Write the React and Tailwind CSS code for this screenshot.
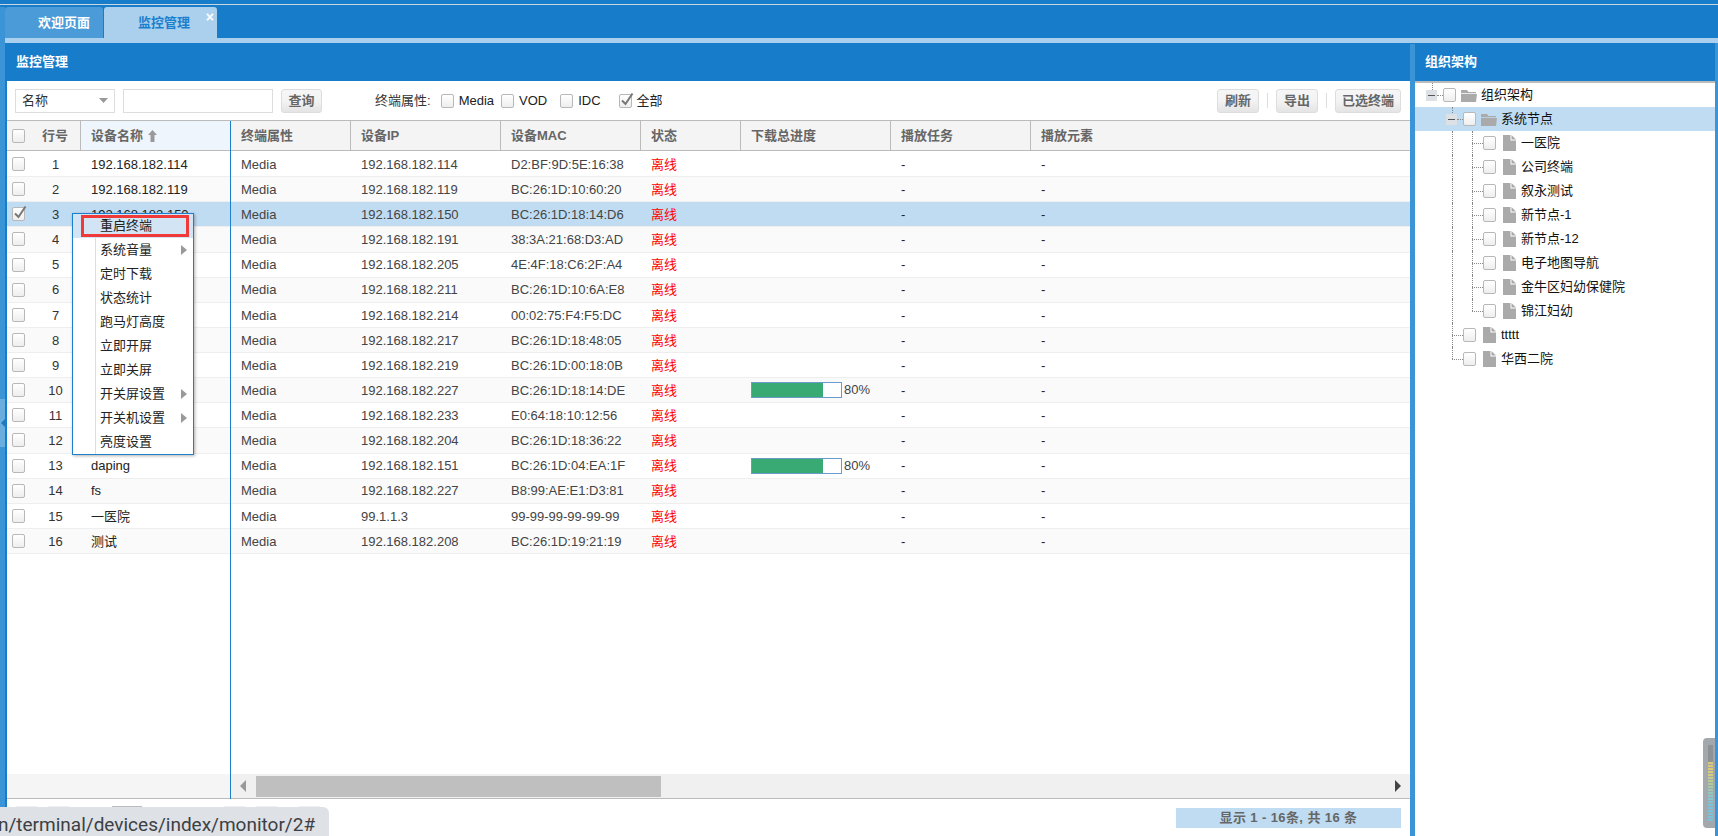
import React from "react";

const rows = [
  ["192.168.182.114", "192.168.182.114", "D2:BF:9D:5E:16:38"],
  ["192.168.182.119", "192.168.182.119", "BC:26:1D:10:60:20"],
  ["192.168.182.150", "192.168.182.150", "BC:26:1D:18:14:D6"],
  ["192.168.182.191", "192.168.182.191", "38:3A:21:68:D3:AD"],
  ["192.168.182.205", "192.168.182.205", "4E:4F:18:C6:2F:A4"],
  ["192.168.182.211", "192.168.182.211", "BC:26:1D:10:6A:E8"],
  ["192.168.182.214", "192.168.182.214", "00:02:75:F4:F5:DC"],
  ["192.168.182.217", "192.168.182.217", "BC:26:1D:18:48:05"],
  ["192.168.182.219", "192.168.182.219", "BC:26:1D:00:18:0B"],
  ["192.168.182.227", "192.168.182.227", "BC:26:1D:18:14:DE", 80],
  ["192.168.182.233", "192.168.182.233", "E0:64:18:10:12:56"],
  ["192.168.182.204", "192.168.182.204", "BC:26:1D:18:36:22"],
  ["daping", "192.168.182.151", "BC:26:1D:04:EA:1F", 80],
  ["fs", "192.168.182.227", "B8:99:AE:E1:D3:81"],
  ["一医院", "99.1.1.3", "99-99-99-99-99-99"],
  ["测试", "192.168.182.208", "BC:26:1D:19:21:19"],
];

const menu = [
  ["重启终端"],
  ["系统音量", true],
  ["定时下载"],
  ["状态统计"],
  ["跑马灯高度"],
  ["立即开屏"],
  ["立即关屏"],
  ["开关屏设置", true],
  ["开关机设置", true],
  ["亮度设置"],
];

function Check({ checked, className = "" }) {
  return (
    <span className={"relative block w-[13px] h-[14px] shrink-0 rounded-[2px] border border-[#b8b8b8] bg-gradient-to-b from-white to-[#eeeeee] " + className}>
      {checked && (
        <svg className="absolute left-0 -top-[3px]" width="14" height="15" viewBox="0 0 14 15">
          <path d="M2 8.5 L5.5 12 L12.5 1.5" fill="none" stroke="#777" strokeWidth="2" />
        </svg>
      )}
    </span>
  );
}

function Btn({ children, className = "" }) {
  return (
    <button className={"h-6 rounded-[3px] border border-[#dddddd] bg-gradient-to-b from-[#f6f6f6] via-[#f3f3f3] to-[#e4e4e4] text-[13px] text-[#666] font-bold " + className}>
      {children}
    </button>
  );
}

function FilterBox({ label, checked, className = "" }) {
  return (
    <span className={"flex items-center gap-[5px] text-[13px] text-[#222] " + className}>
      <Check checked={checked} />
      {label}
    </span>
  );
}

function Th({ w, children, last }) {
  return (
    <div className={"h-full shrink-0 pl-[10px] flex items-center font-bold text-[#666] text-[13px] " + w + (last ? "" : " border-r border-[#bbbbbb]")}>
      {children}
    </div>
  );
}

function rowBg(i) {
  if (i === 2) return "bg-[#bfdcf2]";
  return i % 2 === 0 ? "bg-white" : "bg-[#fafafa]";
}

function Folder() {
  return (
    <svg width="16" height="13" viewBox="0 0 16 13" className="shrink-0">
      <path d="M0 1 H6 L7.5 3 H15 V4.2 H0 Z" fill="#aaa" />
      <path d="M0 5 H16 L15 13 H0 Z" fill="#aaa" />
    </svg>
  );
}

function FileIcon() {
  return (
    <svg width="13" height="16" viewBox="0 0 13 16" className="shrink-0">
      <path d="M0 0 H7.5 V5.5 H13 V16 H0 Z" fill="#aaa" />
      <path d="M8.5 0 L13 4.5 H8.5 Z" fill="#aaa" />
    </svg>
  );
}

function Expander() {
  return (
    <span className="relative w-[11px] h-[11px] shrink-0 bg-[#dde0e4]">
      <span className="absolute left-[2px] top-[5px] w-[7px] h-px bg-[#555]" />
    </span>
  );
}

const dotV = "absolute w-0 border-l border-dotted border-[#888]";
const dotH = "absolute h-0 border-t border-dotted border-[#888]";

function TreeRow({ pl, label, icon, expander, active, v1, v2, h }) {
  return (
    <div className={"relative h-6 flex items-center text-[13px] text-[#111] " + pl + (active ? " bg-[#bfdcf2]" : "")}>
      {v1 === "full" && <span className={dotV + " left-[37px] top-0 h-6"} />}
      {v1 === "half" && <span className={dotV + " left-[37px] top-0 h-3"} />}
      {v2 === "full" && <span className={dotV + " left-[57px] top-0 h-6"} />}
      {v2 === "half" && <span className={dotV + " left-[57px] top-0 h-3"} />}
      {h === 1 && <span className={dotH + " left-[37px] top-3 w-[11px]"} />}
      {h === 2 && <span className={dotH + " left-[57px] top-3 w-[11px]"} />}
      {expander && <Expander />}
      {expander && <span className="w-[6px] shrink-0 border-t border-dotted border-[#888]" />}
      <Check />
      <span className={icon === "folder" ? "ml-[5px] mr-[4px]" : "ml-[7px] mr-[5px]"}>
        {icon === "folder" ? <Folder /> : <FileIcon />}
      </span>
      <span>{label}</span>
    </div>
  );
}

const ticks = ["#d9c878","#dcc870","#dfc972","#d8ca78","#d2cc80","#c8cc88","#bccb90","#aecb98","#a4c9a4","#9cc8b0","#94c8bc","#8cc6c8","#84c5d0","#80c4d8","#7cc2dc","#7cc2dc","#7cc2dc","#7cc2dc","#7cc2dc","#7cc2dc"];

export default function App() {
  return (
    <div className="relative w-[1718px] h-[836px] overflow-hidden bg-[#177cc9] flex flex-col [font-family:'Liberation_Sans','Noto_Sans_CJK_SC',sans-serif] text-[13px]">
      <div className="h-1 shrink-0" />
      <div className="h-px shrink-0 bg-[#c9d6e0]" />
      <div className="flex-1 min-h-0 flex">
        <div className="relative w-[5px] shrink-0 mt-[2px] bg-[#3a94d6]">
          <div className="absolute left-0 top-[392px] w-[5px] h-12 bg-[#6aaee0] flex items-center justify-center">
            <svg width="4" height="8" viewBox="0 0 4 8"><path d="M4 0 V8 L0 4 Z" fill="#1f78be" /></svg>
          </div>
        </div>
        <div className="flex-1 min-w-0 flex flex-col">
          {/* tabs */}
          <div className="h-[33px] shrink-0 flex pt-[2px] gap-px">
            <div className="w-[98px] rounded-t-[3px] bg-[#4a9bd8] text-white font-bold pl-[33px] leading-[32px]">欢迎页面</div>
            <div className="relative w-[113px] rounded-t-[3px] bg-[#aad0ee] text-[#1b7fcd] font-bold pl-[34px] leading-[32px]">
              监控管理
              <span className="absolute right-[3px] top-[3px] text-white text-[14px] leading-[14px]">×</span>
            </div>
          </div>
          <div className="h-[5px] shrink-0 bg-[#aad0ee]" />
          {/* panels */}
          <div className="flex-1 min-h-0 flex">
            {/* main panel */}
            <div className="w-[1405px] shrink-0 flex flex-col">
              <div className="h-[38px] shrink-0 pl-[11px] flex items-center text-white font-bold">监控管理</div>
              <div className="flex-1 min-h-0 ml-[2px] bg-white flex flex-col">
                {/* toolbar */}
                <div className="h-10 shrink-0 border-b border-[#bbbbbb] flex items-center justify-between pr-[9px]">
                  <div className="flex items-center">
                    <div className="ml-2 w-[100px] h-6 border border-[#dddddd] flex items-center justify-between pl-[6px] pr-[6px] text-[#333]">
                      <span>名称</span>
                      <svg width="9" height="5" viewBox="0 0 9 5"><path d="M0 0 H9 L4.5 5 Z" fill="#999" /></svg>
                    </div>
                    <div className="ml-2 w-[150px] h-6 border border-[#dddddd]" />
                    <Btn className="ml-2 w-[41px]">查询</Btn>
                    <span className="ml-[53px] text-[#333]">终端属性:</span>
                    <FilterBox label="Media" className="ml-[10px]" />
                    <FilterBox label="VOD" className="ml-[7px]" />
                    <FilterBox label="IDC" className="ml-[13px]" />
                    <FilterBox label="全部" checked className="ml-[18px]" />
                  </div>
                  <div className="flex items-center">
                    <Btn className="w-[42px]">刷新</Btn>
                    <span className="mx-2 w-px h-[15px] bg-[#dddddd]" />
                    <Btn className="w-[42px]">导出</Btn>
                    <span className="mx-2 w-px h-[15px] bg-[#dddddd]" />
                    <Btn className="w-[66px]">已选终端</Btn>
                  </div>
                </div>
                {/* table */}
                <div className="flex-1 min-h-0 flex">
                  <div className="w-[224px] shrink-0 border-r border-[#1b7fcd] flex flex-col">
                    <div className="h-[30px] shrink-0 flex bg-[#f4f4f4] border-b border-[#bbbbbb]">
                      <div className="w-[33px] shrink-0 flex items-center pl-[5px]"><Check /></div>
                      <div className="w-[41px] shrink-0 border-r border-[#bbbbbb] pr-[10px] flex items-center justify-center font-bold text-[#666]">行号</div>
                      <div className="flex-1 bg-[#eef5fc] pl-[10px] flex items-center gap-[5px] font-bold text-[#666]">
                        设备名称
                        <svg width="9" height="12" viewBox="0 0 9 12"><path d="M4.5 0 L9 5 H6.5 V12 H2.5 V5 H0 Z" fill="#999" /></svg>
                      </div>
                    </div>
                    <div className="flex-1 min-h-0 pt-px">
                      {rows.map((r, i) => (
                        <div key={i} className={"h-[25.13px] border-b border-[#eeeeee] flex items-center " + rowBg(i)}>
                          <div className="w-[33px] shrink-0 pl-[5px]"><Check checked={i === 2} /></div>
                          <div className="w-[41px] shrink-0 pt-px pr-[10px] text-center text-[#333]">{i + 1}</div>
                          <div className="flex-1 pt-px pl-[10px] text-[#222]">{r[0]}</div>
                        </div>
                      ))}
                    </div>
                    <div className="h-[25px] shrink-0 bg-[#f5f5f5] border-b border-[#bbbbbb]" />
                  </div>
                  <div className="flex-1 min-w-0 flex flex-col">
                    <div className="h-[30px] shrink-0 flex bg-[#f4f4f4] border-b border-[#bbbbbb]">
                      <Th w="w-[120px]">终端属性</Th>
                      <Th w="w-[150px]">设备IP</Th>
                      <Th w="w-[140px]">设备MAC</Th>
                      <Th w="w-[100px]">状态</Th>
                      <Th w="w-[150px]">下载总进度</Th>
                      <Th w="w-[140px]">播放任务</Th>
                      <Th w="w-[140px]" last>播放元素</Th>
                    </div>
                    <div className="flex-1 min-h-0 pt-px">
                      {rows.map((r, i) => (
                        <div key={i} className={"h-[25.13px] border-b border-[#eeeeee] flex items-center text-[#444] " + rowBg(i)}>
                          <div className="w-[120px] pt-px pl-[10px] shrink-0">Media</div>
                          <div className="w-[150px] pt-px pl-[10px] shrink-0">{r[1]}</div>
                          <div className="w-[140px] pt-px pl-[10px] shrink-0">{r[2]}</div>
                          <div className="w-[100px] pt-px pl-[10px] shrink-0 text-[#ff0000]">离线</div>
                          <div className="w-[150px] pl-[10px] shrink-0 flex items-center">
                            {r[3] && (
                              <>
                                <span className="block w-[91px] h-4 border border-[#6a9bcb] bg-white">
                                  <span className="block h-full bg-[#3aaa75]" style={{ width: r[3] + "%" }} />
                                </span>
                                <span className="ml-[2px]">{r[3]}%</span>
                              </>
                            )}
                          </div>
                          <div className="w-[140px] pt-px pl-[10px] shrink-0 text-[#222]">-</div>
                          <div className="w-[140px] pt-px pl-[10px] shrink-0 text-[#222]">-</div>
                        </div>
                      ))}
                    </div>
                    <div className="h-[25px] shrink-0 bg-[#f0f0f0] border-b border-[#bbbbbb] flex items-center">
                      <svg className="ml-[9px] shrink-0" width="6" height="12" viewBox="0 0 6 12"><path d="M6 0 V12 L0 6 Z" fill="#999" /></svg>
                      <div className="ml-[10px] w-[405px] h-[21px] bg-[#bfbfbf]" />
                      <div className="flex-1" />
                      <svg className="mr-[9px] shrink-0" width="6" height="12" viewBox="0 0 6 12"><path d="M0 0 V12 L6 6 Z" fill="#444" /></svg>
                    </div>
                  </div>
                </div>
                {/* pager */}
                <div className="h-[37px] shrink-0 flex items-start justify-between pr-[9px]">
                  <div className="flex pt-[7px]">
                    <span className="ml-2 w-6 h-6 rounded-[3px] bg-[#eeeeee]" />
                    <span className="ml-2 w-6 h-6 rounded-[3px] bg-[#eeeeee]" />
                    <span className="ml-[41px] w-[30px] h-6 border border-[#bbbbbb]" />
                    <span className="ml-[81px] w-6 h-6 rounded-[3px] bg-[#eeeeee]" />
                    <span className="ml-2 w-6 h-6 rounded-[3px] bg-[#eeeeee]" />
                    <span className="ml-[18px] w-6 h-6 rounded-[3px] bg-[#eeeeee]" />
                  </div>
                  <div className="mt-[9px] w-[225px] h-5 bg-[#bfdcf2] flex items-center justify-center font-bold text-[#666] tracking-[0.4px]">显示 1 - 16条, 共 16 条</div>
                </div>
              </div>
            </div>
            {/* divider */}
            <div className="w-[5px] shrink-0 bg-[#3a94d6] mt-px" />
            {/* tree panel */}
            <div className="w-[300px] shrink-0 flex flex-col">
              <div className="h-[38px] shrink-0 pl-[10px] flex items-center text-white font-bold">组织架构</div>
              <div className="relative flex-1 min-h-0 bg-white border-t-2 border-[#bbbbbb]">
                <span className={dotV + " left-[17px] top-0 h-[7px]"} />
                <TreeRow pl="pl-[11px]" label="组织架构" icon="folder" expander />
                <TreeRow pl="pl-[31px]" label="系统节点" icon="folder" expander active v1="half" />
                {["一医院", "公司终端", "叙永测试", "新节点-1", "新节点-12", "电子地图导航", "金牛区妇幼保健院"].map((t) => (
                  <TreeRow key={t} pl="pl-[68px]" label={t} icon="file" v1="full" v2="full" h={2} />
                ))}
                <TreeRow pl="pl-[68px]" label="锦江妇幼" icon="file" v1="full" v2="half" h={2} />
                <TreeRow pl="pl-[48px]" label="ttttt" icon="file" v1="full" h={1} />
                <TreeRow pl="pl-[48px]" label="华西二院" icon="file" v1="half" h={1} />
              </div>
            </div>
            <div className="w-[3px] shrink-0 bg-[#3a94d6]" />
          </div>
        </div>
      </div>

      {/* context menu */}
      <div className="absolute left-[72px] top-[213px] w-[122px] h-[242px] bg-white border border-[#1b7fcd] shadow-[1px_1px_3px_rgba(0,0,0,0.3)]">
        <span className="absolute left-[22px] top-0 bottom-0 w-px bg-[#dddddd]" />
        {menu.map(([label, sub], i) => (
          <div key={label} className={"relative h-6 pl-[27px] flex items-center text-[#222] " + (i === 0 ? "bg-[#d3e5f5]" : "")}>
            {label}
            {sub && (
              <svg className="absolute right-[6px] top-[7px]" width="6" height="10" viewBox="0 0 6 10"><path d="M0 0 V10 L6 5 Z" fill="#999" /></svg>
            )}
          </div>
        ))}
        <span className="absolute left-[8px] top-px w-[108px] h-[22px] border-[3px] border-[#f03a3a]" />
      </div>

      {/* floating widget */}
      <div className="absolute left-[1703px] top-[738px] w-3 h-[90px] rounded-l-[4px] bg-[#a3a8ac] pl-[5px] pt-[7px]">
        <svg width="5" height="76" viewBox="0 0 5 76" className="block">
          <rect x="0" y="0" width="5" height="17" fill="#8e9295" />
          {ticks.map((c, i) => (
            <rect key={i} x="0" y={17 + i * 3} width="5" height="2" fill={c} />
          ))}
        </svg>
      </div>

      {/* status bubble */}
      <div className="absolute left-0 bottom-0 w-[329px] h-[29px] bg-[#dee1e6] rounded-tr-[6px] overflow-hidden whitespace-nowrap pt-[6px] text-[19px] leading-[24px] text-[#3c4043] [font-family:Roboto,sans-serif]">
        <span className="block -ml-[2px]">n/terminal/devices/index/monitor/2#</span>
      </div>
    </div>
  );
}
